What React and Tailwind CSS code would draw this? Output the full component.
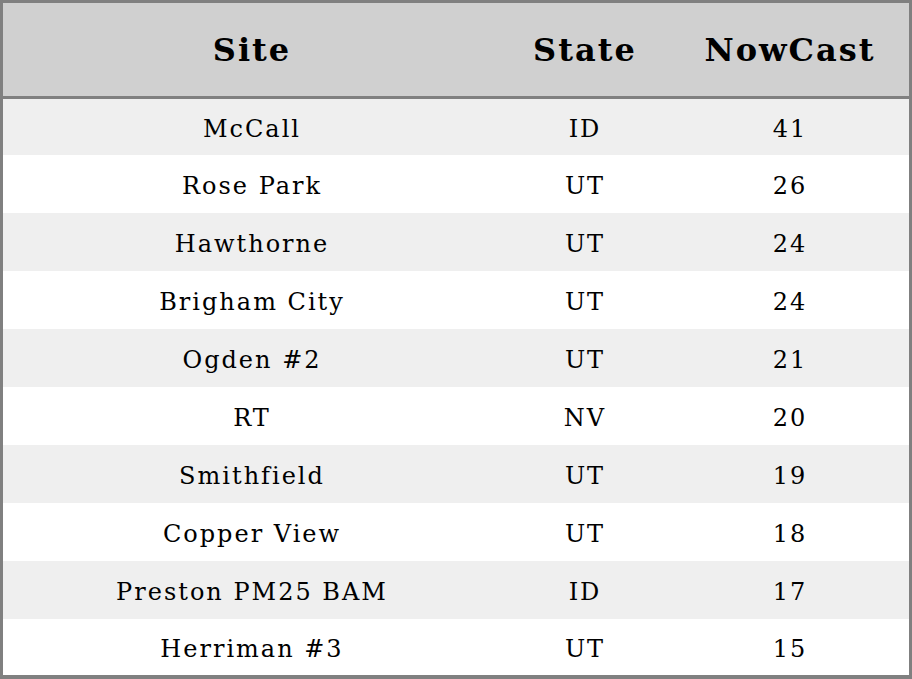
import React from "react";

const rows = [
  ["McCall", "ID", 41],
  ["Rose Park", "UT", 26],
  ["Hawthorne", "UT", 24],
  ["Brigham City", "UT", 24],
  ["Ogden #2", "UT", 21],
  ["RT", "NV", 20],
  ["Smithfield", "UT", 19],
  ["Copper View", "UT", 18],
  ["Preston PM25 BAM", "ID", 17],
  ["Herriman #3", "UT", 15],
];

function App() {
  return (
    <div className="w-[912px] h-[679px] bg-white font-['DejaVu_Serif',serif] text-black tracking-[2px]">
      <div className="border-[3px] border-b-4 border-[#808080] h-full flex flex-col">
        {/* Header */}
        <div className="grid grid-cols-[494px_172px_1fr] h-[93px] bg-[#d0d0d0] border-b-[3px] border-[#808080] box-content items-center text-[32px] font-bold pl-[2px]">
          <div className="text-center">Site</div>
          <div className="text-center">State</div>
          <div className="text-center">NowCast</div>
        </div>

        {/* Rows */}
        {rows.map(([site, state, val], i) => (
          <div
            key={site}
            className={`grid grid-cols-[494px_172px_1fr] items-center text-[24px] pt-[4px] pl-[2px] ${
              i % 2 === 0 ? "bg-[#efefef]" : "bg-white"
            } ${i === 0 || i === rows.length - 1 ? "h-[56px]" : "h-[58px]"}`}
          >
            <div className="text-center">{site}</div>
            <div className="text-center">{state}</div>
            <div className="text-center">{val}</div>
          </div>
        ))}
      </div>
    </div>
  );
}

export default App;
